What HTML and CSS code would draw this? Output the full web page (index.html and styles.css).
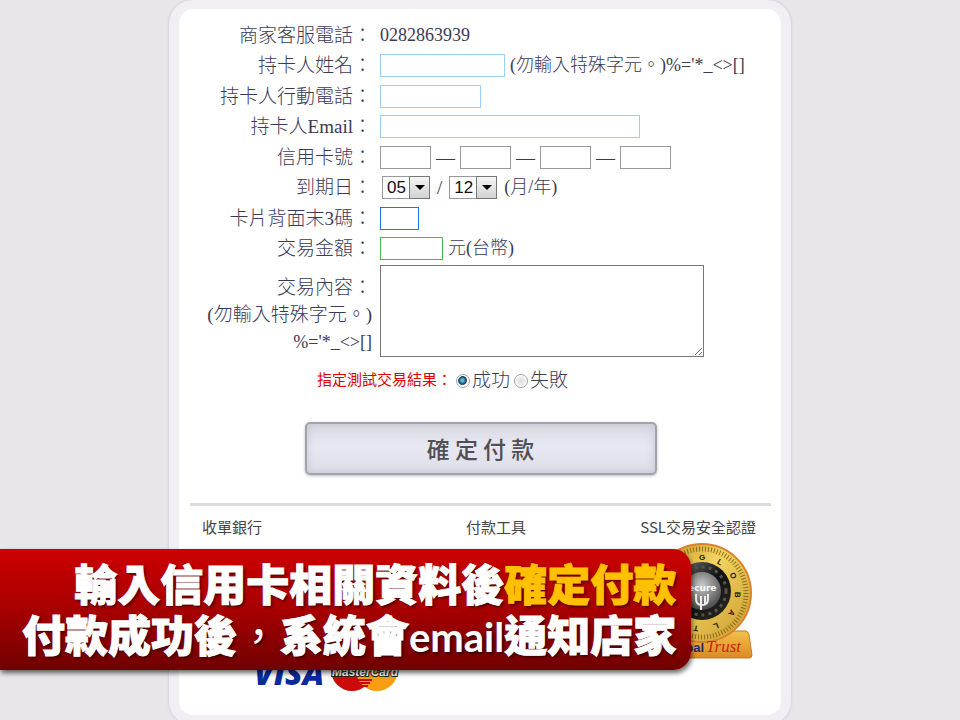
FILE: index.html
```html
<!DOCTYPE html>
<html lang="zh-TW">
<head>
  <meta charset="UTF-8">
  <title>信用卡付款</title>
  <link rel="stylesheet" href="styles.css">
</head>
<body>
  <main class="card">
    <form class="payment">
      <div class="rows">
        <span class="label">商家客服電話：</span>
        <div class="field phone">0282863939</div>

        <label class="label" for="holder">持卡人姓名：</label>
        <div class="field">
          <input class="box box-name" type="text" id="holder">
          <span class="hint">(勿輸入特殊字元。)%='*_&lt;&gt;[]</span>
        </div>

        <label class="label" for="mobile">持卡人行動電話：</label>
        <div class="field"><input class="box box-mobile" type="tel" id="mobile"></div>

        <label class="label" for="email">持卡人Email：</label>
        <div class="field"><input class="box box-email" type="email" id="email"></div>

        <label class="label" for="card1">信用卡號：</label>
        <div class="field">
          <input class="box box-digits" type="text" id="card1" maxlength="4">
          <span>—</span>
          <input class="box box-digits" type="text" aria-label="卡號第二組" maxlength="4">
          <span>—</span>
          <input class="box box-digits" type="text" aria-label="卡號第三組" maxlength="4">
          <span>—</span>
          <input class="box box-digits" type="text" aria-label="卡號第四組" maxlength="4">
        </div>

        <label class="label" for="month">到期日：</label>
        <div class="field expiry">
          <span class="dropdown">
            <select id="month"><option>05</option><option>06</option></select>
          </span>
          <span>/</span>
          <span class="dropdown">
            <select aria-label="年"><option>12</option><option>13</option></select>
          </span>
          <span class="hint">(月/年)</span>
        </div>

        <label class="label" for="cvc">卡片背面末3碼：</label>
        <div class="field"><input class="box box-cvc" type="text" id="cvc" maxlength="3"></div>

        <label class="label" for="amount">交易金額：</label>
        <div class="field">
          <input class="box box-amount" type="text" id="amount">
          <span class="hint">元(台幣)</span>
        </div>
      </div>

      <div class="note">
        <label class="label" for="content">交易內容：<br>(勿輸入特殊字元。)<br><span class="hint">%='*_&lt;&gt;[]</span></label>
        <textarea id="content"></textarea>
      </div>

      <div class="result" role="radiogroup" aria-labelledby="result-title">
        <span class="result-title" id="result-title">指定測試交易結果：</span>
        <label><input type="radio" name="result" checked>成功</label>
        <label><input type="radio" name="result">失敗</label>
      </div>

      <button class="submit" type="button">確 定 付 款</button>
    </form>

    <footer class="footer">
      <span>收單銀行</span>
      <span>付款工具</span>
      <span>SSL交易安全認證</span>

      <div class="brands">
        <svg width="72" height="40" viewBox="0 0 72 40" role="img" aria-label="VISA">
          <text x="0" y="32" class="visa-text" font-size="32">VISA</text>
        </svg>
        <svg width="70" height="46" viewBox="0 0 70 46" role="img" aria-label="MasterCard">
          <circle cx="22" cy="23" r="21" fill="#cc0a0a"/>
          <circle cx="47" cy="23" r="21" fill="#f99d12"/>
          <path d="M27 33h15M28 36h12M30 39h8" stroke="#cc0a0a" stroke-width="2"/>
          <text x="35" y="29" class="master-text" font-size="12">MasterCard</text>
        </svg>
      </div>

      <svg class="seal" width="104" height="116" viewBox="0 0 104 116" role="img" aria-label="GlobalTrust Secure">
        <defs>
          <linearGradient id="gold" x1="0" y1="0" x2="1" y2="1">
            <stop offset="0" stop-color="#b88718"/>
            <stop offset="0.4" stop-color="#f3d462"/>
            <stop offset="1" stop-color="#c99a2c"/>
          </linearGradient>
          <linearGradient id="base" x1="0" y1="0" x2="0" y2="1">
            <stop offset="0" stop-color="#f2c14c"/>
            <stop offset="1" stop-color="#dc8a24"/>
          </linearGradient>
          <radialGradient id="knob" cx="0.5" cy="0.35" r="0.7">
            <stop offset="0" stop-color="#c9c9c9"/>
            <stop offset="1" stop-color="#3c3c3c"/>
          </radialGradient>
          <linearGradient id="ring" x1="0" y1="0" x2="1" y2="1">
            <stop offset="0" stop-color="#7b7b7b"/>
            <stop offset="0.5" stop-color="#111"/>
            <stop offset="1" stop-color="#2c2a22"/>
          </linearGradient>
        </defs>
        <path d="M9 88h88q2 0 3 4l3 20q0 3-3 3H4q-3 0-3-3l3-20q1-4 5-4z" fill="url(#base)" stroke="#c9772a"/>
        <circle cx="53" cy="50" r="49" fill="url(#gold)" stroke="#d9822b" stroke-width="2"/>
        <circle cx="53" cy="50" r="44" fill="none" stroke="#8a6c1c" stroke-width="5" stroke-dasharray="1 2"/>
        <g class="dial-text" font-size="8">
          <text x="53" y="17">G</text>
          <text x="53" y="17" transform="rotate(30 53 50)">L</text>
          <text x="53" y="17" transform="rotate(61 53 50)">O</text>
          <text x="53" y="17" transform="rotate(93 53 50)">B</text>
          <text x="53" y="17" transform="rotate(124 53 50)">A</text>
          <text x="53" y="17" transform="rotate(157 53 50)">L</text>
          <text x="53" y="17" transform="rotate(190 53 50)">T</text>
        </g>
        <circle cx="53" cy="48" r="29" fill="url(#ring)"/>
        <circle cx="53" cy="48" r="24" fill="none" stroke="#55544e" stroke-width="3" stroke-dasharray="3 4"/>
        <circle cx="53" cy="48" r="19" fill="url(#knob)"/>
        <path d="M47 51v5q0 6 6 6t6-6v-5M52 53v14M56 53v9" fill="none" stroke="#eee" stroke-width="2"/>
        <text x="50" y="48" class="secure-text" font-size="9">Secure</text>
        <text x="55" y="109" class="global-text" font-size="13">Global</text>
        <text x="57" y="109" class="trust-text" font-size="17">Trust</text>
      </svg>
    </footer>
  </main>

  <div class="banner">
    輸入信用卡相關資料後<em>確定付款</em><br>
    付款成功後<span class="comma">，</span>系統會<span class="latin">email</span>通知店家
  </div>
</body>
</html>
```
FILE: styles.css
```css
*,
*::before,
*::after {
  box-sizing: border-box;
}
body {
  margin: 0;
  position: relative;
  background: #e8e6e9;
  color: #3a3a58;
  font-family: 'Liberation Serif', 'Noto Sans CJK TC', serif;
  font-size: 19px;
  font-weight: 300;
  line-height: 27px;
}
input, select, textarea, button {
  margin: 0;
  font: inherit;
  color: inherit;
}

.card {
  max-width: 622px;
  margin: 0 auto;
  padding: 11px 0 0 1px;
  background: #fff;
  border: 10px solid #f1eff3;
  border-top-width: 9px;
  border-radius: 24px;
  box-shadow: 0 0 3px #c4c1c6;
}

/* form */
.rows {
  display: grid;
  grid-template-columns: 192px 1fr;
  grid-template-rows: repeat(8, 1fr);
  column-gap: 8px;
  align-items: center;
  height: 244px;
}
.label {
  text-align: right;
}
.field {
  display: flex;
  align-items: center;
  gap: 5px;
  white-space: nowrap;
}
.phone,
.hint {
  font-size: 18px;
}
.box {
  height: 23px;
  padding: 0 2px;
  background: #fff;
  border: 1px solid #999;
}
.box-name,
.box-mobile,
.box-email {
  border-color: #99cffa;
}
.box-name {
  width: 125px;
}
.box-mobile {
  width: 101px;
}
.box-email {
  width: 260px;
}
.box-digits {
  width: 51px;
}
.box-cvc {
  width: 39px;
  border-color: #1f74ea;
}
.box-amount {
  width: 63px;
  border-color: #44bb4a;
}

.expiry {
  gap: 7px;
  padding-left: 2px;
}
.dropdown {
  position: relative;
  display: flex;
}
.dropdown select {
  appearance: none;
  width: 48px;
  height: 23px;
  padding: 0 4px;
  border: 1px solid #999;
  border-radius: 0;
  background: linear-gradient(#f6f6f6, #d2d2d2) right / 20px 100% no-repeat #fff;
  color: #111;
  font: 17px/21px 'Liberation Sans', sans-serif;
}
.dropdown::before {
  content: '';
  position: absolute;
  top: 0;
  right: 0;
  width: 21px;
  height: 23px;
  border: 1px solid #777;
  pointer-events: none;
}
.dropdown::after {
  content: '';
  position: absolute;
  top: 9px;
  right: 5px;
  border: 5px solid transparent;
  border-top-color: #000;
  border-bottom: 0;
  pointer-events: none;
}

.note {
  display: grid;
  grid-template-columns: 192px 324px;
  column-gap: 8px;
  align-items: center;
  margin-top: 1px;
}
.note .label {
  padding-top: 8px;
}
.note textarea {
  height: 92px;
  border: 1px solid #777;
}

.result {
  display: flex;
  justify-content: center;
  align-items: center;
  gap: 4px;
  margin-top: 10px;
  padding-right: 76px;
}
.result label {
  display: flex;
  align-items: center;
  gap: 2px;
}
.result-title {
  color: #e00000;
  font-size: 15px;
  font-weight: 400;
}
.result input {
  appearance: none;
  width: 14px;
  height: 14px;
  border: 1px solid #a3a3a3;
  border-radius: 50%;
  background: radial-gradient(#ddd, #fff);
  box-shadow: inset 0 0 0 1px #fff;
}
.result input:checked {
  background: radial-gradient(circle at 45% 45%, #5fc0dc 1px, #0b3a5c 4px, #fff 5px);
}

.submit {
  display: block;
  width: 352px;
  height: 53px;
  margin: 28px auto 0;
  border: 2px solid #a2a2ac;
  border-radius: 5px;
  background: linear-gradient(#d9d9e3, #e8e8f3 45%, #dedee8);
  box-shadow: inset 0 0 8px #c5c5d2, 0 1px 3px #bbb;
  color: #505054;
  font-family: 'Noto Sans CJK TC', sans-serif;
  font-size: 23px;
  font-weight: 500;
}

/* acquirer, payment brands and SSL seal */
.footer {
  display: grid;
  grid-template-columns: 264px 1fr auto;
  margin: 28px 10px 0;
  padding: 7px 15px 22px 12px;
  border-top: 3px solid #dcdcde;
  color: #444;
  font-family: 'Noto Sans CJK TC', sans-serif;
  font-size: 15px;
  font-weight: 400;
}
.brands {
  grid-column: 1 / 3;
  display: flex;
  align-items: flex-end;
  gap: 4px;
  padding-left: 52px;
}
.seal {
  justify-self: end;
  margin: 3px 3px 34px 0;
}
.visa-text {
  fill: #0a2b9c;
  font-family: 'Open Sans', sans-serif;
  font-style: italic;
  font-weight: 800;
}
.master-text {
  fill: #fff;
  stroke: #222;
  stroke-width: 2px;
  paint-order: stroke;
  font-family: 'Liberation Sans', sans-serif;
  font-style: italic;
  font-weight: 700;
  text-anchor: middle;
}
.dial-text {
  fill: #1c1806;
  font-family: 'Liberation Sans', sans-serif;
  font-weight: 700;
  text-anchor: middle;
}
.secure-text {
  fill: #fff;
  font-family: 'DejaVu Sans', sans-serif;
  font-weight: 700;
  text-anchor: middle;
}
.global-text {
  fill: #1e2a78;
  font-family: 'Liberation Sans', sans-serif;
  font-weight: 700;
  text-anchor: end;
}
.trust-text {
  fill: #cc2418;
  font-family: 'Liberation Serif', serif;
  font-style: italic;
  font-weight: 400;
}

/* caption laid over the page */
.banner {
  position: absolute;
  top: 549px;
  left: 0;
  width: 72%;
  padding: 8px 15px 11px 0;
  background: linear-gradient(#cc0000, #a80000 50%, #700000);
  border-radius: 0 18px 18px 0;
  box-shadow: 1px 3px 5px rgba(0, 0, 0, 0.6);
  color: #fff;
  font-family: 'Noto Sans CJK TC', sans-serif;
  font-size: 43px;
  font-weight: 900;
  line-height: 51px;
  text-align: right;
  text-shadow: 2px 2px 3px rgba(0, 0, 0, 0.6);
  white-space: nowrap;
  -webkit-text-stroke: 1px;
}
.banner em {
  color: #ffc000;
  font-style: normal;
}
.comma {
  font-weight: 400;
  -webkit-text-stroke: 0;
}
.latin {
  font-family: Lato, sans-serif;
  font-size: 40px;
  font-weight: 700;
  line-height: 1;
  -webkit-text-stroke: 0;
}
```
